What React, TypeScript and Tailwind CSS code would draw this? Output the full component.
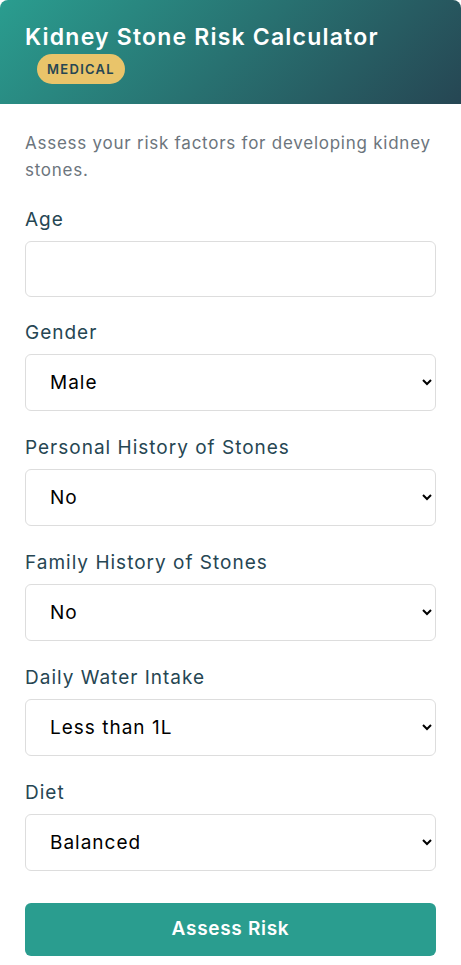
const fields = [
  { label: "Gender", options: ["Male", "Female"] },
  { label: "Personal History of Stones", options: ["No", "Yes"] },
  { label: "Family History of Stones", options: ["No", "Yes"] },
  { label: "Daily Water Intake", options: ["Less than 1L", "1-2L", "More than 2L"] },
  { label: "Diet", options: ["Balanced", "High Protein", "High Sodium", "High Oxalate"] },
]

export default function App() {
  return (
    <div className="min-h-screen bg-white font-['Inter',sans-serif]">
      <div className="rounded-t-lg bg-[linear-gradient(135deg,#2a9d8f,#264653)] h-[104px] px-[25px] pt-[21px]">
        <h1 className="text-[23px] leading-8 font-semibold text-white tracking-[1.2px]">Kidney Stone Risk Calculator</h1>
        <span className="inline-block mt-[1px] ml-3 rounded-full bg-[#e9c46a] px-[10px] h-[30px] leading-[30px] text-[13px] font-semibold text-[#264653] tracking-[1.3px]">
          MEDICAL
        </span>
      </div>
      <div className="px-[25px] pt-[26px]">
        <p className="text-[17px] leading-[27px] text-[#6c757d] mb-[22px] tracking-[0.75px]">
          Assess your risk factors for developing kidney stones.
        </p>
        <div className="mb-[22px]">
          <label className="block text-[19px] leading-[27px] text-[#264653] mb-[8px] tracking-[1px]">Age</label>
          <input type="number" className="block w-full h-[56px] rounded-md border border-[#dddddd] px-5 text-[19px] text-black" />
        </div>
        {fields.map((f) => (
          <div key={f.label} className="mb-[23px]">
            <label className="block text-[19px] leading-[27px] text-[#264653] mb-[8px] tracking-[1px]">{f.label}</label>
            <select className="block w-full h-[57px] rounded-md border border-[#dddddd] bg-white px-5 text-[19px] text-black tracking-[1px]">
              {f.options.map((o) => (
                <option key={o}>{o}</option>
              ))}
            </select>
          </div>
        ))}
        <button className="mt-[9px] w-full h-[53px] rounded-md bg-[#2a9d8f] text-white text-[19px] font-semibold tracking-[0.7px]">
          Assess Risk
        </button>
      </div>
    </div>
  )
}
